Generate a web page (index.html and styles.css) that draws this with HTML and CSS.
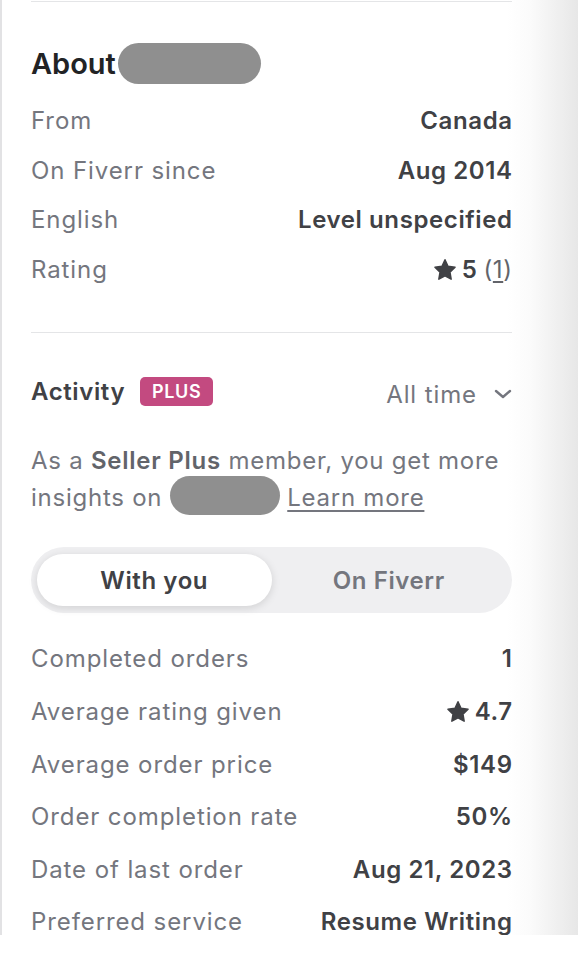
FILE: index.html
```html
<!DOCTYPE html>
<html lang="en">
<head>
  <meta charset="UTF-8">
  <meta name="viewport" content="width=device-width, initial-scale=1.0">
  <title>About the buyer</title>
  <link rel="stylesheet" href="styles.css">
</head>
<body>
  <div class="panel">
    <!-- About Section -->
    <section class="about">
      <h2 class="about-title">About<span class="redact redact-name"></span></h2>
      <div class="facts">
        <div class="row"><span class="label">From</span><span class="value">Canada</span></div>
        <div class="row"><span class="label">On Fiverr since</span><span class="value">Aug 2014</span></div>
        <div class="row"><span class="label">English</span><span class="value">Level unspecified</span></div>
        <div class="row">
          <span class="label">Rating</span>
          <span class="value rating">
            <svg class="star" viewBox="0 0 16 16"><path d="M8 1.2l2 4.3 4.7.6-3.4 3.3.8 4.7L8 11.9l-4.1 2.2.8-4.7L1.3 6.1 6 5.5z"/></svg>
            5 <span class="count">(<u>1</u>)</span>
          </span>
        </div>
      </div>
    </section>

    <!-- Activity Section -->
    <section class="activity">
      <div class="activity-head">
        <div class="activity-title">
          <h3>Activity</h3>
          <span class="badge">PLUS</span>
        </div>
        <button class="period">All time
          <svg class="chevron" viewBox="0 0 18 10"><path d="M2 2l7 6 7-6"/></svg>
        </button>
      </div>
      <p class="insight">As a <b>Seller Plus</b> member, you get more insights on <span class="redact redact-inline"></span> <a href="#">Learn more</a></p>

      <div class="toggle">
        <button class="toggle-btn active">With you</button>
        <button class="toggle-btn">On Fiverr</button>
      </div>

      <div class="stats">
        <div class="row"><span class="label">Completed orders</span><span class="value">1</span></div>
        <div class="row">
          <span class="label">Average rating given</span>
          <span class="value rating">
            <svg class="star" viewBox="0 0 16 16"><path d="M8 1.2l2 4.3 4.7.6-3.4 3.3.8 4.7L8 11.9l-4.1 2.2.8-4.7L1.3 6.1 6 5.5z"/></svg>
            4.7
          </span>
        </div>
        <div class="row"><span class="label">Average order price</span><span class="value">$149</span></div>
        <div class="row"><span class="label">Order completion rate</span><span class="value">50%</span></div>
        <div class="row"><span class="label">Date of last order</span><span class="value">Aug 21, 2023</span></div>
        <div class="row"><span class="label">Preferred service</span><span class="value">Resume Writing</span></div>
      </div>
    </section>
  </div>
</body>
</html>
```

FILE: styles.css
```css
/* Global Styles */
body {
  margin: 0;
  padding: 0;
  font-family: 'Inter', 'Noto Sans', sans-serif;
  background: #fff;
  color: #404145;
}
.panel {
  height: 935px;
  overflow: hidden;
  box-sizing: border-box;
  padding: 1px 66px 0 29px;
  border-left: 2px solid #e2e2e4;
  background: linear-gradient(90deg, #fff 505px, #fbfbfb 528px, #e7e7e7 100%);
}
.row {
  display: flex;
  justify-content: space-between;
  align-items: center;
  font-size: 24px;
}
.label {
  color: #74767e;
  letter-spacing: 0.9px;
}
.value {
  font-weight: 600;
  color: #404145;
  letter-spacing: 0.6px;
  margin-right: -0.6px;
}
.redact {
  display: inline-block;
  background: #8f8f8f;
  border-radius: 999px;
}
.star {
  width: 24px;
  height: 24px;
  fill: #404145;
  stroke: #404145;
  stroke-width: 1;
  stroke-linejoin: round;
  margin-right: 5px;
}
.rating {
  display: flex;
  align-items: center;
}

/* About */
.about {
  border-top: 1px solid #e4e5e7;
  padding: 41px 0 38px;
}
.about-title {
  display: flex;
  align-items: center;
  height: 41px;
  margin: 0 0 12px;
  font-size: 29px;
  font-weight: 600;
  color: #222325;
}
.redact-name {
  width: 143px;
  height: 41px;
  margin-left: 2px;
}
.facts .row {
  height: 49.6px;
  line-height: 49.6px;
}
.count {
  font-weight: 400;
  margin-left: 6px;
  color: #62646a;
}
.count u {
  text-underline-offset: 3px;
}

/* Activity */
.activity {
  border-top: 1px solid #e4e5e7;
  padding-top: 36px;
}
.activity-head {
  display: flex;
  justify-content: space-between;
  align-items: center;
  height: 44px;
}
.activity-title {
  display: flex;
  align-items: center;
  gap: 15px;
}
.activity-title h3 {
  margin: 0;
  font-size: 24px;
  font-weight: 600;
  letter-spacing: 0.6px;
  color: #404145;
}
.badge {
  display: inline-flex;
  align-items: center;
  height: 29px;
  padding: 0 12px;
  border-radius: 5px;
  background: #c34a80;
  color: #fff;
  font-size: 18px;
  font-weight: 600;
  letter-spacing: 0.6px;
}
.period {
  display: flex;
  align-items: center;
  gap: 17px;
  padding: 0;
  border: none;
  background: none;
  font-family: inherit;
  font-size: 24px;
  letter-spacing: 0.9px;
  color: #74767e;
  margin-top: 6px;
}
.chevron {
  width: 18px;
  height: 10px;
  fill: none;
  stroke: #74767e;
  stroke-width: 2.4;
  stroke-linecap: round;
  stroke-linejoin: round;
}
.insight {
  margin: 29px 0 31px;
  font-size: 24px;
  line-height: 37px;
  letter-spacing: 0.75px;
  color: #74767e;
}
.insight b {
  font-weight: 600;
  color: #62646a;
}
.insight a {
  color: #74767e;
  text-underline-offset: 4px;
}
.redact-inline {
  width: 110px;
  height: 39px;
  margin: -4px 0 0 0;
  vertical-align: -9px;
}

/* Toggle */
.toggle {
  display: grid;
  grid-template-columns: 1fr 1fr;
  height: 66px;
  box-sizing: border-box;
  padding: 7px 6px;
  border-radius: 33px;
  background: #efeff1;
}
.toggle-btn {
  border: none;
  border-radius: 26px;
  background: none;
  font-family: inherit;
  font-size: 24px;
  font-weight: 600;
  letter-spacing: 0.6px;
  color: #74767e;
}
.toggle-btn.active {
  background: #fff;
  color: #404145;
  box-shadow: 0 2px 8px rgba(0,0,0,0.13);
}

/* Stats */
.stats {
  padding-top: 20px;
}
.stats .row {
  height: 52.6px;
  line-height: 52.6px;
}
```
